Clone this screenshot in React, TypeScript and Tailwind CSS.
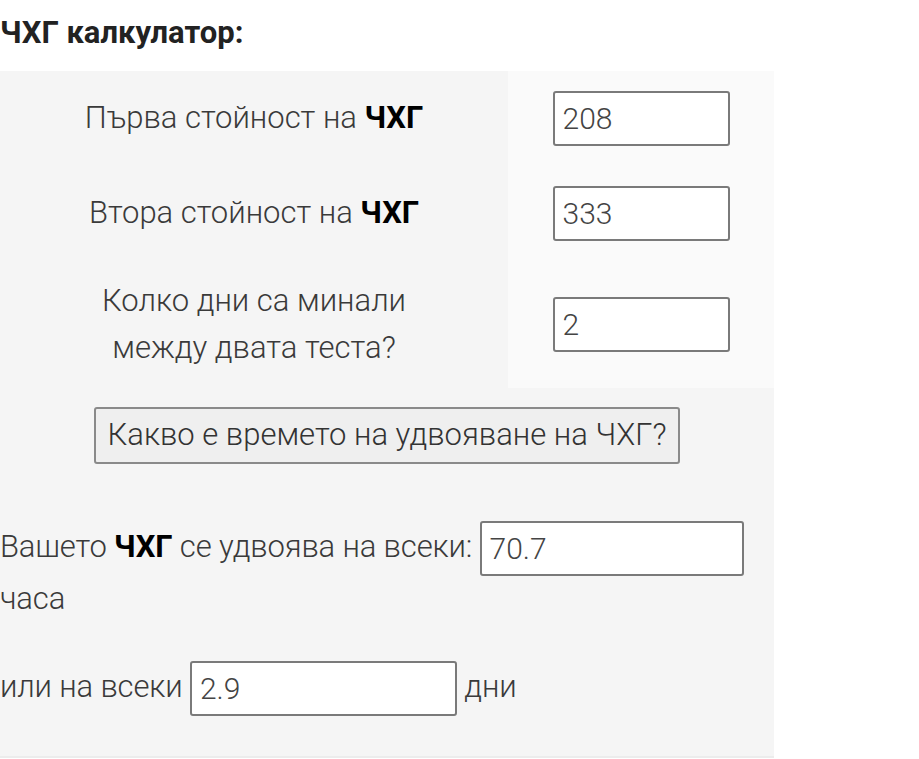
import React from "react";

// hCG doubling-time calculator, static snapshot of the filled-in form.
function Field({ value, className = "" }: { value: string; className?: string }) {
  return (
    <input
      readOnly
      value={value}
      className={`h-[55px] rounded-[3px] border-2 border-[#7a7a7a] bg-white px-2 text-[30px] font-light tracking-normal text-[#444] outline-none ${className}`}
    />
  );
}

export default function App() {
  return (
    <div className="min-h-[759px] bg-white font-['Roboto','Liberation_Sans',sans-serif] text-[#333]">
      <h2 className="pt-[14px] pb-[19px] text-[31px] font-bold leading-[38px] text-[#222]">
        ЧХГ калкулатор:
      </h2>

      <div className="w-[774px] border-b-2 border-[#ececec] bg-[#f5f5f5]">
        <div className="grid grid-cols-[508px_266px] text-[31px] font-light text-[#3a3a3a]">
          <div className="flex h-[95px] items-center justify-center">
            <span>
              Първа стойност на <b className="font-bold text-black">ЧХГ</b>
            </span>
          </div>
          <div className="flex h-[95px] items-center justify-center bg-[#fafafa]">
            <Field value="208" className="w-[177px]" />
          </div>

          <div className="flex h-[94px] items-center justify-center">
            <span>
              Втора стойност на <b className="font-bold text-black">ЧХГ</b>
            </span>
          </div>
          <div className="flex h-[94px] items-center justify-center bg-[#fafafa]">
            <Field value="333" className="w-[177px]" />
          </div>

          <div className="flex h-[128px] items-center justify-center text-center leading-[47px]">
            <span>
              Колко дни са минали
              <br />
              между двата теста?
            </span>
          </div>
          <div className="flex h-[128px] items-center justify-center bg-[#fafafa]">
            <Field value="2" className="w-[177px]" />
          </div>
        </div>

        <div className="flex h-[133px] items-start justify-center pt-[19px]">
          <button className="h-[57px] w-[586px] rounded-[3px] border-2 border-[#8a8a8a] bg-[#efefef] text-[31px] font-light text-[#333]">
            Какво е времето на удвояване на ЧХГ?
          </button>
        </div>

        <div className="pb-[40px] text-[31px] font-light leading-[46px] tracking-[-0.15px] text-[#3a3a3a]">
          <p className="mb-[39px]">
            Вашето <b className="font-bold text-black">ЧХГ</b> се удвоява на всеки:{" "}
            <Field value="70.7" className="w-[264px] align-middle" /> часа
          </p>
          <p>
            или на всеки <Field value="2.9" className="w-[267px] align-middle" /> дни
          </p>
        </div>
      </div>
    </div>
  );
}
